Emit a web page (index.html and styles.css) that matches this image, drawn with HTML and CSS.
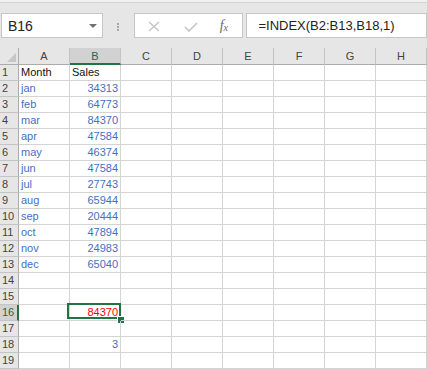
FILE: index.html
```html
<!DOCTYPE html>
<html>
<head>
<meta charset="utf-8">
<link rel="stylesheet" href="styles.css">
</head>
<body>
<div class="app">
  <div class="topstrip"></div>
  <div class="toolbar">
    <div class="namebox">
      <span class="name">B16</span>
      <span class="ddarrow"></span>
    </div>
    <div class="grip"><i></i><i></i><i></i></div>
    <div class="btnbox">
      <svg class="ico-x" width="12" height="11" viewBox="0 0 12 11"><path d="M1 1 L11 10 M11 1 L1 10" stroke="#c4c4c4" stroke-width="1.4" fill="none"/></svg>
      <svg class="ico-check" width="14" height="10" viewBox="0 0 14 10"><path d="M1 5 L5 9 L13 1" stroke="#c4c4c4" stroke-width="1.6" fill="none"/></svg>
      <span class="fx">f<sub>x</sub></span>
    </div>
    <div class="formula">=INDEX(B2:B13,B18,1)</div>
  </div>
  <div class="sheet">
    <div class="hd corner"><span class="tri"></span></div>
    <div class="hd col">A</div>
    <div class="hd col sel">B</div>
    <div class="hd col">C</div>
    <div class="hd col">D</div>
    <div class="hd col">E</div>
    <div class="hd col">F</div>
    <div class="hd col">G</div>
    <div class="hd col">H</div>

    <div class="rh">1</div><div class="c t">Month</div><div class="c t">Sales</div><div class="c"></div><div class="c"></div><div class="c"></div><div class="c"></div><div class="c"></div><div class="c"></div>
    <div class="rh">2</div><div class="c b">jan</div><div class="c b n">34313</div><div class="c"></div><div class="c"></div><div class="c"></div><div class="c"></div><div class="c"></div><div class="c"></div>
    <div class="rh">3</div><div class="c b">feb</div><div class="c b n">64773</div><div class="c"></div><div class="c"></div><div class="c"></div><div class="c"></div><div class="c"></div><div class="c"></div>
    <div class="rh">4</div><div class="c b">mar</div><div class="c b n">84370</div><div class="c"></div><div class="c"></div><div class="c"></div><div class="c"></div><div class="c"></div><div class="c"></div>
    <div class="rh">5</div><div class="c b">apr</div><div class="c b n">47584</div><div class="c"></div><div class="c"></div><div class="c"></div><div class="c"></div><div class="c"></div><div class="c"></div>
    <div class="rh">6</div><div class="c b">may</div><div class="c b n">46374</div><div class="c"></div><div class="c"></div><div class="c"></div><div class="c"></div><div class="c"></div><div class="c"></div>
    <div class="rh">7</div><div class="c b">jun</div><div class="c b n">47584</div><div class="c"></div><div class="c"></div><div class="c"></div><div class="c"></div><div class="c"></div><div class="c"></div>
    <div class="rh">8</div><div class="c b">jul</div><div class="c b n">27743</div><div class="c"></div><div class="c"></div><div class="c"></div><div class="c"></div><div class="c"></div><div class="c"></div>
    <div class="rh">9</div><div class="c b">aug</div><div class="c b n">65944</div><div class="c"></div><div class="c"></div><div class="c"></div><div class="c"></div><div class="c"></div><div class="c"></div>
    <div class="rh">10</div><div class="c b">sep</div><div class="c b n">20444</div><div class="c"></div><div class="c"></div><div class="c"></div><div class="c"></div><div class="c"></div><div class="c"></div>
    <div class="rh">11</div><div class="c b">oct</div><div class="c b n">47894</div><div class="c"></div><div class="c"></div><div class="c"></div><div class="c"></div><div class="c"></div><div class="c"></div>
    <div class="rh">12</div><div class="c b">nov</div><div class="c b n">24983</div><div class="c"></div><div class="c"></div><div class="c"></div><div class="c"></div><div class="c"></div><div class="c"></div>
    <div class="rh">13</div><div class="c b">dec</div><div class="c b n">65040</div><div class="c"></div><div class="c"></div><div class="c"></div><div class="c"></div><div class="c"></div><div class="c"></div>
    <div class="rh">14</div><div class="c"></div><div class="c"></div><div class="c"></div><div class="c"></div><div class="c"></div><div class="c"></div><div class="c"></div><div class="c"></div>
    <div class="rh">15</div><div class="c"></div><div class="c"></div><div class="c"></div><div class="c"></div><div class="c"></div><div class="c"></div><div class="c"></div><div class="c"></div>
    <div class="rh sel">16</div><div class="c"></div><div class="c r n active">84370<span class="selbox"></span><span class="handle"></span></div><div class="c"></div><div class="c"></div><div class="c"></div><div class="c"></div><div class="c"></div><div class="c"></div>
    <div class="rh">17</div><div class="c"></div><div class="c"></div><div class="c"></div><div class="c"></div><div class="c"></div><div class="c"></div><div class="c"></div><div class="c"></div>
    <div class="rh">18</div><div class="c"></div><div class="c b n">3</div><div class="c"></div><div class="c"></div><div class="c"></div><div class="c"></div><div class="c"></div><div class="c"></div>
    <div class="rh">19</div><div class="c"></div><div class="c"></div><div class="c"></div><div class="c"></div><div class="c"></div><div class="c"></div><div class="c"></div><div class="c"></div>
  </div>
</div>
</body>
</html>
```

FILE: styles.css
```css
* { box-sizing: border-box; }
html, body { margin: 0; padding: 0; }
body {
  width: 427px;
  height: 369px;
  overflow: hidden;
  background: #ffffff;
  font-family: "Liberation Sans", Arial, sans-serif;
}
.app { width: 427px; }
.topstrip {
  height: 3px;
  background: #f0f0f0;
  border-bottom: 1px solid #d4d4d4;
}
.toolbar {
  height: 45px;
  background: #e6e6e6;
  display: flex;
  align-items: flex-start;
  padding: 10px 0 0 1px;
}
.namebox {
  width: 102px;
  height: 25px;
  background: #fff;
  border: 1px solid #c6c6c6;
  display: flex;
  align-items: center;
  justify-content: space-between;
  padding: 0 5px 0 6px;
}
.name {
  font-size: 14px;
  color: #222;
}
.ddarrow {
  width: 0;
  height: 0;
  border-left: 4px solid transparent;
  border-right: 4px solid transparent;
  border-top: 4px solid #707070;
  margin-top: 1px;
}
.grip {
  width: 31px;
  height: 25px;
  display: flex;
  flex-direction: column;
  align-items: center;
  justify-content: center;
  gap: 1px;
  padding-top: 3px;
}
.grip i {
  display: block;
  width: 2px;
  height: 2px;
  background: #a8a8a8;
}
.btnbox {
  width: 110px;
  height: 25px;
  background: #fff;
  border: 1px solid #c6c6c6;
  display: flex;
  align-items: center;
  padding-left: 13px;
}
.ico-x { margin-top: 1px; }
.ico-check { margin-left: 24px; margin-top: 2px; }
.fx {
  margin-left: 22px;
  font-family: "Liberation Serif", serif;
  font-style: italic;
  font-size: 14px;
  color: #6a6a6a;
  line-height: 1;
}
.fx sub { font-size: 10px; vertical-align: -1px; }
.formula {
  margin-left: 3px;
  width: 181px;
  height: 25px;
  background: #fff;
  border: 1px solid #c6c6c6;
  padding-left: 11px;
  font-size: 13px;
  line-height: 23px;
  color: #222;
  white-space: nowrap;
}
.sheet {
  display: grid;
  grid-template-columns: 19px repeat(8, 51px);
  grid-auto-rows: 16px;
  grid-template-rows: 17px;
  font-size: 11px;
}
.hd {
  background: #e6e6e6;
  border-right: 1px solid #c4c4c4;
  border-bottom: 1px solid #ababab;
  color: #444;
  text-align: center;
  line-height: 16px;
  font-size: 11px;
}
.hd.col.sel {
  background: #d2d2d2;
  color: #1e6b3f;
  border-bottom: 2px solid #217346;
}
.corner { position: relative; border-right-color: #ababab; }
.tri {
  position: absolute;
  right: 2px;
  bottom: 2px;
  width: 0;
  height: 0;
  border-left: 9px solid transparent;
  border-bottom: 9px solid #c6c6c6;
}
.rh {
  background: #e6e6e6;
  border-right: 1px solid #ababab;
  border-bottom: 1px solid #c4c4c4;
  color: #444;
  font-size: 11px;
  line-height: 15px;
  padding-left: 2px;
}
.rh.sel {
  background: #d2d2d2;
  color: #1e6b3f;
  border-right: 2px solid #217346;
}
.c {
  border-right: 1px solid #d4d4d4;
  border-bottom: 1px solid #d4d4d4;
  line-height: 15px;
  padding: 0 2px;
  white-space: nowrap;
  position: relative;
}
.c.t { color: #111; }
.c.b { color: #4470c4; }
.c.r { color: #ff0000; }
.c.n { text-align: right; }
.selbox {
  position: absolute;
  left: -3px;
  top: -2px;
  right: -1px;
  bottom: 1px;
  border: 2px solid #217346;
}
.handle {
  position: absolute;
  left: 47px;
  top: 11px;
  width: 7px;
  height: 7px;
  background: #217346;
  border-left: 1px solid #fff;
  border-top: 1px solid #fff;
}
```
